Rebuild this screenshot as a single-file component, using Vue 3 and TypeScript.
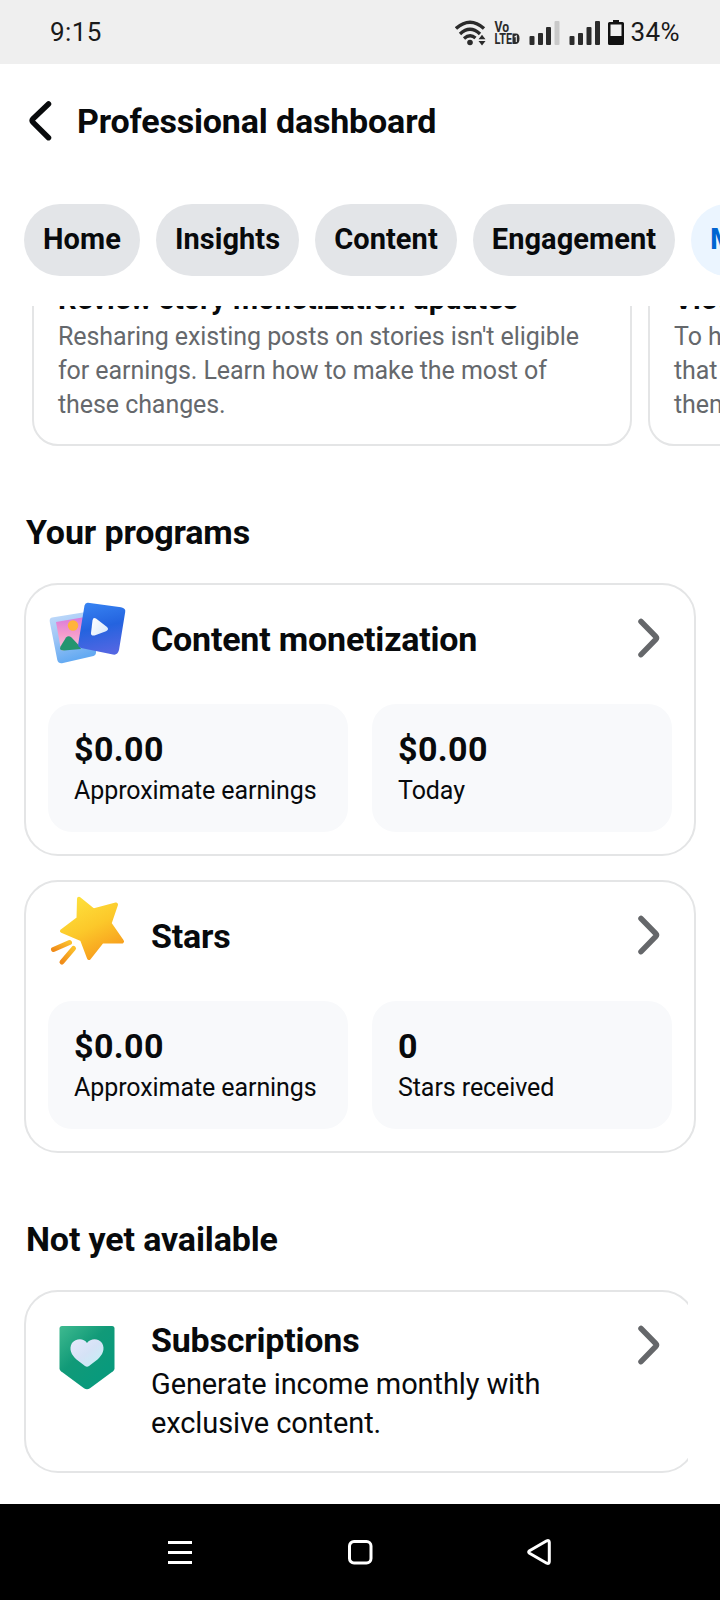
<script setup lang="ts">
interface Tile { value: string; label: string }
interface Program { id: 'content' | 'stars'; title: string; tiles: Tile[] }

const tabs: { label: string; active?: boolean }[] = [
  { label: 'Home' },
  { label: 'Insights' },
  { label: 'Content' },
  { label: 'Engagement' },
  { label: 'Monetization', active: true },
]

const updates: { title: string; lines: string[] }[] = [
  {
    title: 'Review story monetization updates',
    lines: ["Resharing existing posts on stories isn't eligible", 'for earnings. Learn how to make the most of', 'these changes.'],
  },
  { title: 'View', lines: ['To help', 'that', 'them'] },
]

const programs: Program[] = [
  {
    id: 'content',
    title: 'Content monetization',
    tiles: [{ value: '$0.00', label: 'Approximate earnings' }, { value: '$0.00', label: 'Today' }],
  },
  {
    id: 'stars',
    title: 'Stars',
    tiles: [{ value: '$0.00', label: 'Approximate earnings' }, { value: '0', label: 'Stars received' }],
  },
]
</script>

<template>
  <div class="screen">
    <div class="status">
      <span class="time">9:15</span>
      <svg class="status-icons" width="172" height="32" viewBox="0 0 172 32">
        <g fill="none" stroke="#2b2b2b" stroke-width="3.4">
          <path d="M1 12.500 Q15 0 29 12.500" />
          <path d="M5 18 Q15 8.500 25 18" />
          <path d="M9 22.500 Q15 17.500 20.500 22" />
        </g>
        <circle cx="15" cy="26.500" r="2.800" fill="#2b2b2b" />
        <path d="M23.500 23.300 L27 18.800 L30.500 23.300Z M23.500 25 L27 29.500 L30.500 25Z" fill="#2b2b2b" />
        <text class="volte" x="39.500" y="16" font-size="14" textLength="14.500" lengthAdjust="spacingAndGlyphs">Vo</text>
        <text class="volte" x="39.500" y="28" font-size="15" textLength="17.500" lengthAdjust="spacingAndGlyphs">LTE</text>
        <path d="M57.500 17.500h3.500q3.500 0 3.500 5t-3.500 5.500H57.500z" fill="#2b2b2b" />
        <path d="M59.500 21l1.800-1v6" fill="none" stroke="#efefef" stroke-width="1.100" />
        <g fill="#2b2b2b">
          <rect x="74.500" y="20" width="5" height="9" rx="1" />
          <rect x="83" y="17" width="5" height="12" rx="1" />
          <rect x="91" y="11" width="5" height="18" rx="1" />
          <rect x="99.500" y="5" width="5" height="24" rx="1" fill="#c9c9c9" />
          <rect x="114.500" y="20" width="5" height="9" rx="1" />
          <rect x="123" y="17" width="5" height="12" rx="1" />
          <rect x="131.500" y="11" width="5" height="18" rx="1" />
          <rect x="140" y="5" width="5" height="24" rx="1" />
        </g>
        <path fill="#111" fill-rule="evenodd" d="M158 4h6v2h3.500q1.500 0 1.500 1.500v20q0 1.500-1.500 1.500h-13q-1.500 0-1.500-1.500v-20q0-1.500 1.500-1.500h3.500zM155.500 8.500v11.500h11v-11.500z" />
      </svg>
      <span class="percent">34%</span>
    </div>

    <header class="header">
      <svg class="back" width="24" height="40" viewBox="0 0 24 40">
        <path d="M20.500 3 L4.800 18.100 Q3.300 19.600 4.800 21.100 L20.500 36.700" />
      </svg>
      <h1 class="page-title">Professional dashboard</h1>
    </header>

    <nav class="tabs">
      <span v-for="t in tabs" :key="t.label" class="tab" :class="{ active: t.active }">{{ t.label }}</span>
    </nav>

    <main class="content">
      <div class="carousel">
        <article v-for="u in updates" :key="u.title" class="update">
          <h3 class="update-title">{{ u.title }}</h3>
          <p v-for="l in u.lines" :key="l" class="update-line">{{ l }}</p>
        </article>
      </div>

      <h2 class="section first">Your programs</h2>

      <section v-for="p in programs" :key="p.id" class="card">
        <div class="card-head">
          <svg v-if="p.id === 'content'" class="art content-art" width="80" height="72" viewBox="0 0 80 72">
            <defs>
              <linearGradient id="frame" x1="0" y1="0" x2="0.300" y2="1">
                <stop offset="0" stop-color="#c3dcfa" /><stop offset="0.500" stop-color="#9fc6f6" /><stop offset="1" stop-color="#64aaf2" />
              </linearGradient>
              <linearGradient id="photo" x1="0" y1="0" x2="0" y2="1">
                <stop offset="0" stop-color="#d979dc" /><stop offset="0.500" stop-color="#f49bcc" /><stop offset="1" stop-color="#f6c3dc" />
              </linearGradient>
              <linearGradient id="video" x1="0.200" y1="0" x2="0.400" y2="1">
                <stop offset="0" stop-color="#3783f2" /><stop offset="0.500" stop-color="#2463df" /><stop offset="1" stop-color="#5266e2" />
              </linearGradient>
              <linearGradient id="play" x1="0" y1="0" x2="1" y2="0.600">
                <stop offset="0" stop-color="#ffffff" /><stop offset="1" stop-color="#dcebfb" />
              </linearGradient>
            </defs>
            <path fill="url(#frame)" d="M6 14.500 L40 9 Q43 8.600 43.500 11.500 L50 48 Q50.500 52 47.500 53 L17 60 Q12.500 61 11.300 57 L3.800 19 Q3.100 15 6 14.500Z" />
            <path fill="url(#photo)" d="M10 19 L39 14 L43 43 L16 47.500 Q15 47.500 14.700 45.500Z" />
            <circle cx="27" cy="22.500" r="5.200" fill="#ffb43b" />
            <path fill="#24956f" d="M20 34.500 Q22.500 32 25.500 34.500 L33 42.500 L35 46 L18 47.500 Q12.500 47.500 14.500 43.500Z" />
            <path fill="url(#video)" d="M42 0.800 L75 5.300 Q80 6.200 79.200 10 L73 48 Q71.500 53.500 67 52.500 L35 46 Q31.500 45 32.300 41.500 L38.500 3.500 Q39.300 0.600 42 0.800Z" transform="translate(0 -1)" />
            <path fill="url(#play)" d="M46.500 17.500 Q47 14 50 15.500 L61 24 Q63.500 26.500 60 28.200 L48.500 32.500 Q44.800 33 45 30Z" />
          </svg>
          <svg v-else class="art" width="80" height="72" viewBox="0 0 80 72">
            <defs>
              <linearGradient id="gold" x1="0.200" y1="0" x2="0.700" y2="1">
                <stop offset="0" stop-color="#fde03c" /><stop offset="0.500" stop-color="#fcc82a" /><stop offset="1" stop-color="#f79a1c" />
              </linearGradient>
              <linearGradient id="tail" x1="1" y1="0" x2="0" y2="1">
                <stop offset="0" stop-color="#fbc02c" /><stop offset="1" stop-color="#f08c19" />
              </linearGradient>
            </defs>
            <path fill="url(#gold)" stroke="url(#gold)" stroke-width="4" stroke-linejoin="round" d="M31 0.800 L45.500 12.500 L68 6.500 L61.500 25.500 L74 43.500 L54 43.500 L41 60 L34 41.500 L14 33 L30.500 20.500Z" />
            <path d="M5.500 51.500 L21.500 44.500" class="trail" /><path d="M14 64 L25.500 50.500" class="trail" />
          </svg>
          <h3 class="card-title">{{ p.title }}</h3>
          <svg class="chevron" width="26" height="42" viewBox="0 0 26 42">
            <path d="M5 4.500 L19.700 19.500 Q21.200 21 19.700 22.500 L5 37.700" />
          </svg>
        </div>
        <div class="tiles">
          <div v-for="t in p.tiles" :key="t.label" class="tile">
            <div class="value">{{ t.value }}</div>
            <div class="label">{{ t.label }}</div>
          </div>
        </div>
      </section>

      <h2 class="section second">Not yet available</h2>

      <div class="clip">
        <section class="card sub-card">
          <svg class="badge" width="56" height="64" viewBox="0 0 56 64">
            <defs>
              <linearGradient id="shield" x1="0" y1="0" x2="0.700" y2="0.800">
                <stop offset="0" stop-color="#3fba90" /><stop offset="0.550" stop-color="#119a78" /><stop offset="1" stop-color="#099a7c" />
              </linearGradient>
              <linearGradient id="heart" x1="0" y1="0" x2="1" y2="1">
                <stop offset="0" stop-color="#e6e9fb" /><stop offset="0.500" stop-color="#d5e2f6" /><stop offset="1" stop-color="#c3f1f5" />
              </linearGradient>
            </defs>
            <path fill="url(#shield)" d="M3 0h50q2.500 0 2.500 2.500v40q0 1.500-1.500 2.700l-23 17q-3 2-6 0l-23-17q-1.500-1.200-1.500-2.700v-40q0-2.500 2.500-2.500z" />
            <path fill="url(#heart)" d="M28 17 C32 11.500 40 12.500 43 17 C46.500 23 43.500 29 38.500 33.500 L30 40 Q28 41.500 26 40 L17.500 33.500 C12.500 29 9.500 23 13 17 C16.500 12.500 24.500 11.500 28 17Z" />
          </svg>
          <div class="sub-text">
            <h3 class="card-title">Subscriptions</h3>
            <p class="desc">Generate income monthly with<br />exclusive content.</p>
          </div>
          <svg class="chevron sub-chevron" width="26" height="42" viewBox="0 0 26 42">
            <path d="M5 4.500 L19.700 19.500 Q21.200 21 19.700 22.500 L5 37.700" />
          </svg>
        </section>
      </div>
    </main>

    <footer class="sysnav">
      <svg width="28" height="28" viewBox="0 0 28 28"><path d="M2 4.500h24M2 14.500h24M2 24.500h24" /></svg>
      <svg width="28" height="28" viewBox="0 0 28 28"><rect x="3.500" y="3.500" width="21.500" height="21.500" rx="4.500" /></svg>
      <svg width="28" height="28" viewBox="0 0 28 28"><path d="M3.500 12.800 L20.800 2.800 Q23.300 1.800 23.300 4.500 V23.500 Q23.300 26.200 20.800 25.200 L3.500 15.200 Q1.800 14 3.500 12.800Z" /></svg>
    </footer>
  </div>
</template>

<style>
body { margin: 0; background: #fff; }
</style>

<style scoped>
.screen {
  width: 720px; height: 1600px; overflow: hidden; display: flex; flex-direction: column;
  background: #fff; color: #080a0c; font-family: Roboto, "Noto Sans", sans-serif;
}
h1, h2, h3, p { margin: 0; }
svg { display: block; flex: none; }
.status {
  height: 64px; flex: none; box-sizing: border-box; padding: 0 40px 0 50px; background: #efefef;
  display: flex; align-items: center; font-size: 26px; color: #1a1a1a; letter-spacing: 0.400px;
}
.time { flex: 1; }
.status-icons { margin: 0 4px 0 0; letter-spacing: 0; }
.volte { font-family: Roboto, sans-serif; font-weight: 700; fill: #2b2b2b; }
.header { height: 114px; flex: none; display: flex; align-items: center; padding-left: 28px; }
.back path { fill: none; stroke: #080a0c; stroke-width: 5.500; stroke-linecap: round; }
.page-title { margin-left: 25px; font-size: 34px; line-height: 40px; font-weight: 700; white-space: nowrap; letter-spacing: -0.160px; }
.tabs { margin-top: 26px; height: 72px; flex: none; display: flex; gap: 16px; padding-left: 24px; overflow: hidden; }
.tab {
  flex: none; box-sizing: border-box; height: 72px; padding: 0 19px; border-radius: 36px; background: #e3e5e8;
  font-size: 29px; line-height: 70px; font-weight: 700; letter-spacing: 0.060px;
}
.tab.active { background: #ebf5ff; color: #0064d1; }
.content { margin-top: 30px; height: 1198px; flex: none; overflow: hidden; }
.carousel { height: 140px; display: flex; align-items: flex-end; gap: 16px; padding-left: 32px; overflow: hidden; }
.update {
  flex: none; width: 600px; height: 220px; box-sizing: border-box; border: 2px solid #e4e5e6; border-radius: 26px;
  padding: 0 24px 22px; display: flex; flex-direction: column; justify-content: flex-end; white-space: nowrap;
}
.update-title { font-size: 29px; line-height: 34px; font-weight: 700; margin-bottom: 4px; letter-spacing: 0.080px; }
.update-line { font-size: 25px; line-height: 34px; color: #65686c; letter-spacing: -0.070px; }
.section { margin-left: 26px; font-size: 34px; line-height: 40px; font-weight: 700; letter-spacing: -0.140px; }
.section.first { margin-top: 66px; margin-bottom: 31px; }
.section.second { margin-top: 66px; margin-bottom: 31px; }
.card {
  width: 672px; height: 273px; margin: 0 0 24px 24px; box-sizing: border-box; border: 2px solid #e4e5e6; border-radius: 34px;
}
.card-head { height: 119px; display: flex; align-items: flex-start; padding-left: 22px; }
.art { margin-top: 16px; overflow: visible; }
.content-art { margin: 18px 2px 0 -2px; }
.trail { fill: none; stroke: url(#tail); stroke-width: 5; stroke-linecap: round; }
.card-title { font-size: 34px; line-height: 40px; font-weight: 700; letter-spacing: -0.200px; }
.card-head .card-title { margin: 34px 0 0 23px; flex: 1; }
.chevron { margin: 32px 32px 0 0; }
.chevron path { fill: none; stroke: #65676a; stroke-width: 5.500; stroke-linecap: round; }
.tiles { display: flex; gap: 24px; padding: 0 22px; }
.tile { flex: 1; height: 128px; box-sizing: border-box; padding: 25px 0 0 26px; border-radius: 24px; background: #f8f9fb; }
.value { font-size: 34px; line-height: 40px; font-weight: 700; letter-spacing: 0.400px; }
.label { font-size: 25px; line-height: 34px; margin-top: 5px; letter-spacing: -0.080px; }
.clip { width: 688px; overflow: hidden; }
.sub-card { height: 183px; display: flex; align-items: flex-start; margin-bottom: 0; }
.badge { margin: 34px 0 0 33px; }
.sub-text { flex: 1; margin: 28px 0 0 36px; }
.desc { font-size: 29px; line-height: 39px; margin-top: 5px; letter-spacing: -0.100px; }
.sub-chevron { margin-top: 32px; }
.sysnav { height: 96px; flex: none; background: #000; display: flex; align-items: center; justify-content: center; gap: 152px; }
.sysnav svg path, .sysnav svg rect { fill: none; stroke: #fff; stroke-width: 3; stroke-linejoin: round; }
</style>
